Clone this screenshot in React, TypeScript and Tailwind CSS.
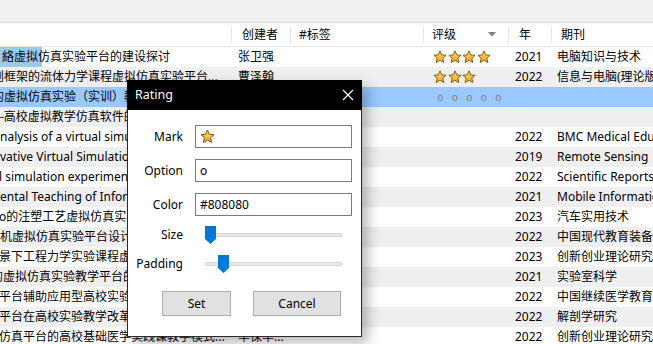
import React from 'react';

type Row = {
  title: string;
  offset: number;
  creator?: string;
  rating?: number;
  empty?: boolean;
  year?: string;
  journal?: string;
  highlight?: number;
};

const rows: Row[] = [
  { title: '絡虚拟仿真实验平台的建设探讨', offset: 2, creator: '张卫强', rating: 4, year: '2021', journal: '电脑知识与技术', highlight: 3 },
  { title: '则框架的流体力学课程虚拟仿真实验平台...', offset: -8, creator: '曹泽翰', rating: 3, year: '2022', journal: '信息与电脑(理论版)' },
  { title: '的虚拟仿真实验（实训）教学中心建设...', offset: -8, empty: true },
  { title: '-高校虚拟教学仿真软件的开发与应用', offset: 0 },
  { title: 'nalysis of a virtual simulation platform', offset: 0, year: '2022', journal: 'BMC Medical Education' },
  { title: 'vative Virtual Simulation Teaching', offset: 0, year: '2019', journal: 'Remote Sensing' },
  { title: 'l simulation experiment teaching', offset: -1, year: '2022', journal: 'Scientific Reports' },
  { title: 'ental Teaching of Information', offset: 0, year: '2021', journal: 'Mobile Information Systems' },
  { title: 'o的注塑工艺虚拟仿真实验教学', offset: -1, year: '2023', journal: '汽车实用技术' },
  { title: '机虚拟仿真实验平台设计与实现', offset: 0, year: '2022', journal: '中国现代教育装备' },
  { title: '景下工程力学实验课程虚拟仿真', offset: -1, year: '2023', journal: '创新创业理论研究' },
  { title: '的虚拟仿真实验教学平台的构建', offset: -9, year: '2021', journal: '实验室科学' },
  { title: '平台辅助应用型高校实验教学', offset: -1, year: '2022', journal: '中国继续医学教育' },
  { title: '平台在高校实验教学改革中的应用', offset: -1, year: '2022', journal: '解剖学研究' },
  { title: '仿真平台的高校基础医学实践课教学模式...', offset: -1, creator: '毕保华...', year: '2022', journal: '创新创业理论研究' },
];

const Star = ({ size = 14 }: { size?: number }) => (
  <svg width={size} height={size} viewBox="0 0 24 24">
    <defs>
      <linearGradient id="sg" x1="0" y1="0" x2="0" y2="1">
        <stop offset="0" stopColor="#ffd65c" />
        <stop offset="1" stopColor="#f5a623" />
      </linearGradient>
    </defs>
    <path
      d="M12 1.5l3.1 6.9 7.4.7-5.6 5 1.7 7.4L12 17.7l-6.6 3.8 1.7-7.4-5.6-5 7.4-.7z"
      fill="url(#sg)"
      stroke="#7a5514"
      strokeWidth="1.6"
      strokeLinejoin="round"
    />
  </svg>
);

const Thumb = () => (
  <svg width="11" height="18" viewBox="0 0 11 18">
    <polygon points="0,0 11,0 11,13 5.5,18 0,13" fill="#0078d7" />
  </svg>
);

const Slider = ({ pos }: { pos: number }) => (
  <div className="relative w-[137px] h-[18px]">
    <div className="absolute left-0 right-0 top-[7px] h-[4px] bg-[#e7e7e7] border border-[#d6d6d6]" />
    <div className="absolute top-0" style={{ left: pos }}>
      <Thumb />
    </div>
  </div>
);

const Field = ({ label, children }: { label: string; children: React.ReactNode }) => (
  <div className="flex items-center">
    <div className="w-[55px] text-right">{label}</div>
    <div className="ml-[12px] w-[157px] h-[23px] border border-[#7a7a7a] flex items-center px-[4px]">{children}</div>
  </div>
);

export default function App() {
  return (
    <div className="relative w-[653px] h-[344px] overflow-hidden bg-white text-[12px] text-black font-['Noto_Sans','Noto_Sans_CJK_SC',sans-serif]">
      <div className="h-[23px] bg-[#f0f0f0] border-b border-[#dadada]" />
      <div className="flex h-[24px] py-[3px] border-b border-[#e3e3e3] items-stretch">
        <div className="w-[232px] shrink-0 border-r border-[#e5e5e5]" />
        <div className="w-[59px] shrink-0 border-r border-[#e5e5e5] pl-[10px] flex items-center">创建者</div>
        <div className="w-[133px] shrink-0 border-r border-[#e5e5e5] pl-[8px] flex items-center">#标签</div>
        <div className="w-[85px] shrink-0 border-r border-[#e5e5e5] pl-[8px] pr-[12px] flex items-center justify-between">
          <span>评级</span>
          <svg width="8" height="5" viewBox="0 0 8 5">
            <polygon points="0,0 8,0 4,4.5" fill="#808080" />
          </svg>
        </div>
        <div className="w-[43px] shrink-0 border-r border-[#e5e5e5] pl-[10px] flex items-center">年</div>
        <div className="flex-1 pl-[9px] flex items-center">期刊</div>
      </div>
      {rows.map((r, i) => {
        const bg = r.empty ? 'bg-[#99c9ff]' : i % 2 === 1 ? 'bg-[#efefef]' : 'bg-white';
        return (
          <div key={i} className={`flex h-[20px] items-center whitespace-nowrap ${bg}`}>
            <div className="w-[232px] shrink-0 h-full overflow-hidden flex items-center">
              {r.highlight ? (
                <>
                  <span className="h-full flex items-center bg-[#9ccbea] pl-[2px] pr-[4px]">{r.title.slice(0, r.highlight)}</span>
                  <span className="-ml-[4px]">{r.title.slice(r.highlight)}</span>
                </>
              ) : (
                <span style={{ marginLeft: r.offset }}>{r.title}</span>
              )}
            </div>
            <div className="w-[59px] shrink-0 pl-[6px] overflow-hidden">{r.creator}</div>
            <div className="w-[133px] shrink-0" />
            <div className="w-[85px] shrink-0 pl-[9px] flex items-center">
              {r.rating
                ? Array.from({ length: r.rating }).map((_, k) => (
                    <span key={k} className="w-[14.5px] flex">
                      <Star />
                    </span>
                  ))
                : null}
              {r.empty
                ? Array.from({ length: 5 }).map((_, k) => (
                    <span key={k} className="w-[14.5px] text-center text-[10px] leading-none text-[#808080]">
                      o
                    </span>
                  ))
                : null}
            </div>
            <div className="w-[43px] shrink-0 pl-[6px]">{r.year}</div>
            <div className="flex-1 pl-[5px]">{r.journal}</div>
          </div>
        );
      })}

      <div className="absolute left-[127px] top-[80px] w-[235px] h-[257px] bg-white border border-[#2a2a2a] border-t-0 shadow-[6px_6px_12px_rgba(0,0,0,0.28)] flex flex-col">
        <div className="h-[30px] bg-black text-white flex items-center justify-between pl-[8px] pr-[8px] -mx-px">
          <span className="text-[12.5px]">Rating</span>
          <svg width="12" height="12" viewBox="0 0 12 12">
            <path d="M1 1L11 11M11 1L1 11" stroke="#fff" strokeWidth="1.2" />
          </svg>
        </div>
        <div className="flex flex-col pt-[15px] gap-[11px]">
          <Field label="Mark">
            <Star size={15} />
          </Field>
          <Field label="Option">o</Field>
          <Field label="Color">#808080</Field>
        </div>
        <div className="flex flex-col pt-[10px] gap-[11px]">
          <div className="flex items-center">
            <div className="w-[55px] text-right">Size</div>
            <div className="ml-[22px]">
              <Slider pos={0} />
            </div>
          </div>
          <div className="flex items-center">
            <div className="w-[55px] text-right">Padding</div>
            <div className="ml-[22px]">
              <Slider pos={13} />
            </div>
          </div>
        </div>
        <div className="flex pl-[34px] pt-[18px] gap-[22px]">
          <button className="w-[69px] h-[25px] bg-[#e1e1e1] border border-[#adadad]">Set</button>
          <button className="w-[88px] h-[25px] bg-[#e1e1e1] border border-[#adadad]">Cancel</button>
        </div>
      </div>
    </div>
  );
}
